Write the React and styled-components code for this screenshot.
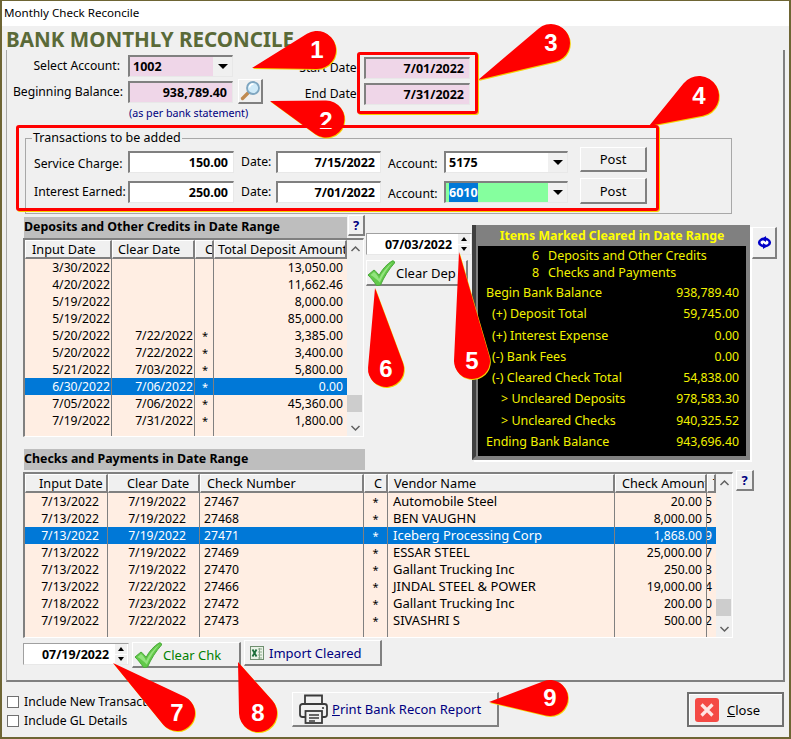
import React from "react";
import styled, { createGlobalStyle } from "styled-components";

const Global = createGlobalStyle`
  html, body { margin: 0; padding: 0; background: #f0f0f0; }
  * { box-sizing: border-box; }
`;

const Win = styled.div`
  position: relative;
  width: 791px;
  height: 739px;
  overflow: hidden;
  display: flex;
  flex-direction: column;
  background: #f0f0f0;
  border-style: solid;
  border-color: #6e6534;
  border-width: 1px 2px 2px 2px;
  font-family: "Noto Sans", sans-serif;
  font-size: 13px;
  color: #000;
`;
const TitleBar = styled.div`
  height: 25px;
  flex: none;
  background: #fff;
  padding-left: 2px;
  font-size: 11.6px;
  line-height: 24px;
`;
const Heading = styled.div`
  height: 24px;
  flex: none;
  padding-left: 4px;
  font-size: 20.6px;
  font-weight: 700;
  line-height: 26px;
  color: #5a6a38;
`;
const Panel = styled.div`
  height: 632px;
  flex: none;
  margin-left: 4px;
  width: 779px;
  border-left: 1px solid #a8a8a8;
  border-right: 2px solid #808080;
  border-bottom: 2px solid #808080;
`;
const TopSection = styled.div`
  display: flex;
  gap: 6px;
  height: 80px;
`;
const AccountGrid = styled.div`
  display: grid;
  grid-template-columns: 116px 105px 24px;
  grid-auto-rows: 22px;
  column-gap: 5px;
  row-gap: 4px;
  padding-top: 5px;
  width: 257px;
  align-items: center;
`;
const Label = styled.div`
  text-align: right;
  white-space: nowrap;
  font-size: 12.2px;
  padding-right: ${(p) => p.$pad || 0}px;
  padding-bottom: 2px;
`;
const Sunken = styled.div`
  height: 22px;
  display: flex;
  align-items: center;
  justify-content: ${(p) => (p.$left ? "flex-start" : "flex-end")};
  background: ${(p) => p.$bg || "#fff"};
  border-style: solid;
  border-width: 2px 1px 1px 2px;
  border-color: #808080 #e8e8e8 #e8e8e8 #808080;
  padding: 0 ${(p) => (p.$left ? 0 : 5)}px 0 ${(p) => (p.$left ? 3 : 0)}px;
  font-size: 12.5px;
  font-weight: 700;
  white-space: nowrap;
  overflow: hidden;
`;
const DropArrow = styled.span`
  margin-left: auto;
  width: 19px;
  height: 100%;
  flex: none;
  background: #f0f0f0;
  display: flex;
  align-items: center;
  justify-content: center;
  &::after {
    content: "";
    border-style: solid;
    border-width: 5px 5px 0 5px;
    border-color: #000 transparent transparent transparent;
  }
`;
const Btn = styled.button`
  display: flex;
  align-items: center;
  justify-content: ${(p) => p.$justify || "center"};
  gap: ${(p) => p.$gap || 0}px;
  width: ${(p) => p.$w}px;
  height: ${(p) => p.$h}px;
  margin-top: ${(p) => p.$top || 0}px;
  margin-left: ${(p) => p.$ml || 0}px;
  padding: 0 ${(p) => p.$px || 0}px;
  flex: none;
  background: #f0f0f0;
  border-style: solid;
  border-width: 1px 2px 2px 1px;
  border-color: #fff #808080 #808080 #fff;
  font-family: inherit;
  font-size: 13px;
  font-weight: ${(p) => (p.$bold ? 700 : 400)};
  color: ${(p) => p.$color || "#000"};
  white-space: nowrap;
`;
const BalanceBtn = styled(Btn)`
  margin-top: -2px;
`;
const Note = styled.div`
  grid-column: 2 / 4;
  align-self: start;
  font-size: 10.7px;
  line-height: 14px;
  color: #000080;
  padding-left: 1px;
  margin-top: -1px;
`;
const DateGrid = styled.div`
  display: grid;
  grid-template-columns: 90px 106px;
  grid-auto-rows: 22px;
  column-gap: 4px;
  row-gap: 4px;
  padding-top: 7px;
  align-items: center;
`;
const Fieldset = styled.fieldset`
  margin: 0 0 0 18px;
  padding: 5px 0 0 8px;
  width: 707px;
  height: 84px;
  border: 1px solid #a8a8a8;
`;
const Legend = styled.legend`
  margin-left: -2px;
  padding: 0 1px;
  font-size: 12.5px;
  line-height: 16px;
`;
const TxGrid = styled.div`
  display: grid;
  grid-template-columns: 94px 106px 42px 105px 63px 124px 79px;
  grid-auto-rows: 22px;
  row-gap: 8px;
  align-items: center;
`;
const TxLabel = styled.div`
  padding-left: ${(p) => p.$pad || 0}px;
  padding-top: ${(p) => (p.$low ? 2 : 0)}px;
  padding-bottom: ${(p) => (p.$low ? 0 : 2)}px;
  font-size: 12.2px;
  white-space: nowrap;
`;
const Middle = styled.div`
  display: flex;
  height: 258px;
  margin-left: 16px;
  margin-top: 0;
`;
const LeftCol = styled.div`
  width: 342px;
  flex: none;
  padding-top: 1px;
`;
const BarRow = styled.div`
  display: flex;
  align-items: flex-start;
  height: 23px;
`;
const SectionBar = styled.div`
  width: ${(p) => p.$w}px;
  height: 21px;
  margin: ${(p) => p.$mt || 0}px 0 0 1px;
  background: #bebebe;
  font-size: 12.4px;
  font-weight: 700;
  line-height: 19px;
  white-space: nowrap;
  flex: none;
`;
const HelpBtn = styled(Btn)`
  color: #000080;
  font-weight: 700;
  padding: 0;
`;
const Table = styled.div`
  display: flex;
  width: ${(p) => p.$w}px;
  height: ${(p) => p.$h}px;
  flex: none;
  background: #f0f0f0;
  border-style: solid;
  border-width: 2px 1px 1px 2px;
  border-color: #808080 #fff #fff #808080;
`;
const TableBody = styled.div`
  display: flex;
  flex-direction: column;
  flex: none;
  width: ${(p) => p.$w}px;
  background: #ffeee3;
`;
const HeadRow = styled.div`
  display: grid;
  grid-template-columns: ${(p) => p.$cols};
  height: 19px;
  flex: none;
  background: #f0f0f0;
`;
const HeadCell = styled.div`
  padding-left: ${(p) => p.$pl || 0}px;
  border-style: solid;
  border-width: 1px 2px 2px 1px;
  border-color: #fff #808080 #808080 #fff;
  font-size: 12.7px;
  line-height: 16px;
  white-space: nowrap;
  overflow: hidden;
`;
const BodyRow = styled.div`
  display: grid;
  grid-template-columns: ${(p) => p.$cols};
  height: ${(p) => (p.$fill ? "auto" : "17px")};
  flex: ${(p) => (p.$fill ? 1 : "none")};
  background: ${(p) => (p.$sel ? "#0078d7" : "transparent")};
  color: ${(p) => (p.$sel ? "#fff" : "#000")};
`;
const Cell = styled.div`
  display: flex;
  justify-content: ${(p) => (p.$al === "r" ? "flex-end" : p.$al === "c" ? "center" : "flex-start")};
  padding-left: ${(p) => p.$pl || 0}px;
  padding-right: ${(p) => p.$pr || 0}px;
  border-right: ${(p) => (p.$last ? "none" : "1px solid #808080")};
  font-size: ${(p) => (p.$star ? 11 : p.$num ? 12.2 : 13)}px;
  line-height: 17px;
  white-space: nowrap;
  overflow: hidden;
`;
const ScrollBar = styled.div`
  flex: 1;
  display: flex;
  flex-direction: column;
  align-items: center;
  position: relative;
  padding-top: 5px;
`;
const Chevron = styled.svg`
  flex: none;
  width: 11px;
  height: 8px;
  margin-top: ${(p) => (p.$push ? "auto" : 0)};
  margin-bottom: ${(p) => (p.$push ? 4 : 0)}px;
`;
const Thumb = styled.div`
  position: absolute;
  left: 0;
  width: 15px;
  height: 17px;
  bottom: ${(p) => p.$bottom}px;
  background: #cdcdcd;
`;
const SpinCol = styled.div`
  width: 106px;
  flex: none;
  margin-left: 1px;
  padding-top: 19px;
`;
const Spinner = styled.div`
  display: flex;
  align-items: center;
  width: ${(p) => p.$w}px;
  height: 22px;
  margin-top: ${(p) => p.$top || 0}px;
  flex: none;
  background: #fff;
  border-style: solid;
  border-width: 1px;
  border-color: #a0a0a0 #e8e8e8 #e8e8e8 #a0a0a0;
  font-size: 12.4px;
  font-weight: 700;
  padding-right: 1px;
`;
const SpinValue = styled.div`
  flex: 1;
  text-align: right;
  padding-right: 6px;
`;
const Stepper = styled.div`
  width: 12px;
  height: 20px;
  flex: none;
  display: flex;
  flex-direction: column;
  gap: 1px;
  background: #fff;
`;
const Step = styled.span`
  flex: 1;
  background: #f0f0f0;
  display: flex;
  align-items: center;
  justify-content: center;
  &::after {
    content: "";
    border-style: solid;
    border-color: transparent;
    border-width: ${(p) => (p.$up ? "0 3.5px 4px 3.5px" : "4px 3.5px 0 3.5px")};
    ${(p) => (p.$up ? "border-bottom-color:#000;" : "border-top-color:#000;")}
  }
`;
const ClearDep = styled(Btn)`
  margin-top: 5px;
  padding-left: 0;
`;
const Summary = styled.div`
  width: 278px;
  height: 235px;
  margin-top: 11px;
  flex: none;
  display: flex;
  flex-direction: column;
  background: #808080;
  padding-left: 2px;
  border-left: 4px solid #404040;
  border-right: 4px solid #808080;
  border-bottom: 4px solid #808080;
  box-shadow: 2px 2px 0 #fff;
`;
const SummaryHead = styled.div`
  height: 21px;
  flex: none;
  color: #ffff00;
  text-align: center;
  font-size: 12.3px;
  font-weight: 700;
  line-height: 21px;
`;
const SummaryBody = styled.div`
  flex: 1;
  background: #000;
  color: #f2f200;
  padding: 0 7px 0 8px;
  font-size: 12.5px;
`;
const CountLine = styled.div`
  display: grid;
  grid-template-columns: 46px 16px 1fr;
  height: 17px;
  line-height: 20px;
`;
const Amount = styled.div`
  display: flex;
  justify-content: space-between;
  height: 21.3px;
  line-height: 21px;
  padding-left: ${(p) => p.$indent || 0}px;
  white-space: nowrap;
`;
const AmountValue = styled.span`
  font-size: 12.3px;
`;
const Counts = styled.div`
  height: 36px;
`;
const ChecksRow = styled.div`
  display: flex;
  height: 166px;
  margin-left: 16px;
`;
const BottomRow = styled.div`
  display: flex;
  align-items: flex-start;
  gap: 3px;
  margin: 2px 0 0 16px;
`;
const Footer = styled.div`
  display: flex;
  align-items: flex-start;
  padding-top: 10px;
`;
const CheckCol = styled.div`
  width: 290px;
  flex: none;
  padding: 4px 0 0 5px;
  display: flex;
  flex-direction: column;
  gap: 7px;
`;
const CheckLine = styled.label`
  display: flex;
  align-items: center;
  gap: 5px;
  height: 12px;
  font-size: 12.2px;
  white-space: nowrap;
`;
const CheckText = styled.span`
  margin-top: -1px;
`;
const CheckBox = styled.span`
  width: 12px;
  height: 12px;
  flex: none;
  background: #fff;
  border: 1px solid #707070;
`;
const CloseBtn = styled(Btn)`
  margin-left: auto;
  margin-right: 5px;
  border: 2px solid #707070;
  box-shadow: inset 1px 1px 0 #fff;
`;
const Under = styled.span`
  text-decoration: underline;
`;
const Overlay = styled.svg`
  position: absolute;
  left: -2px;
  top: -1px;
  width: 791px;
  height: 739px;
  pointer-events: none;
`;
const Digit = styled.text`
  font-family: "Liberation Sans", sans-serif;
  font-weight: 700;
  font-size: 24px;
  fill: #fff;
  text-anchor: middle;
`;
const Frame = styled.div`
  position: absolute;
  left: ${(p) => p.$x - 2}px;
  top: ${(p) => p.$y - 1}px;
  width: ${(p) => p.$w}px;
  height: ${(p) => p.$h}px;
  border: 3px solid #f00;
  border-radius: 3px;
  box-shadow: 1px 1px 0 #f5d000;
  pointer-events: none;
`;
const SelText = styled.span`
  background: #0078d7;
  color: #fff;
  height: 100%;
  display: flex;
  align-items: center;
`;

const ChevUp = () => (
  <Chevron viewBox="0 0 11 8"><polyline points="1.5,6 5.5,2 9.5,6" fill="none" stroke="#606060" strokeWidth="1.5" /></Chevron>
);
const ChevDown = () => (
  <Chevron $push viewBox="0 0 11 8"><polyline points="1.5,2 5.5,6 9.5,2" fill="none" stroke="#606060" strokeWidth="1.5" /></Chevron>
);
const Magnifier = () => (
  <svg width="21" height="21" viewBox="0 0 21 21">
    <line x1="2.5" y1="18.5" x2="9" y2="12" stroke="#c08a50" strokeWidth="3.4" strokeLinecap="round" />
    <circle cx="13" cy="8" r="6" fill="#cfeaf8" stroke="#7fa6c0" strokeWidth="1.8" />
    <path d="M9.5 7.5a4 4 0 0 1 4-3.5" fill="none" stroke="#fff" strokeWidth="1.6" />
  </svg>
);
const CheckMark = () => (
  <svg width="28" height="26" viewBox="0 0 28 26">
    <path d="M1 15 L7 10 C9 11.5 11 13.5 12 15.5 C15 9.5 20 4 25 1 C26.5 .5 28 1.5 27.5 3 C22 9 17 17 13.5 25 L9.5 25.5 C7 21.5 4 18 1 15 Z" fill="#62c94a" stroke="#4aa83a" strokeWidth="1" />
    <path d="M3.5 15 L7 12 C9 13.5 11 16 12 19 C15 12 20 6.5 25.5 2.5 C20.5 8 16 15 12.8 22.5 C10 19.5 7 17 3.5 15 Z" fill="#a4ec92" opacity=".75" />
  </svg>
);
const Excel = () => (
  <svg width="14" height="14" viewBox="0 0 14 14">
    <rect x=".5" y=".5" width="13" height="13" fill="#e9f2e6" stroke="#6f8f6f" />
    <path d="M8 3h4M8 6h4M8 9h4M8 12h4M9.5 2v11" stroke="#8aa88a" strokeWidth="1" />
    <path d="M2.5 3.5l4 7M6.5 3.5l-4 7" stroke="#1d6f3a" strokeWidth="1.8" />
  </svg>
);
const Printer = () => (
  <svg width="32" height="32" viewBox="0 0 32 32" fill="none" stroke="#3a3a3a" strokeWidth="1.8">
    <path d="M7 11V2.5h17V11" />
    <path d="M7 24H4.5A2.5 2.5 0 0 1 2 21.5V13.5A2.5 2.5 0 0 1 4.5 11h22A2.5 2.5 0 0 1 29 13.5v8a2.5 2.5 0 0 1-2.5 2.5H24" />
    <rect x="7.5" y="18" width="16.5" height="12" fill="#f0f0f0" />
    <path d="M11 22h10M11 25h10M11 28h6" strokeWidth="1.3" />
    <circle cx="25" cy="15" r="1.1" fill="#3a3a3a" stroke="none" />
  </svg>
);
const CloseIcon = () => (
  <svg width="24" height="24" viewBox="0 0 24 24">
    <rect width="24" height="24" rx="3" fill="#f44a45" />
    <path d="M6.5 6.5l11 11M17.5 6.5l-11 11" stroke="#ffe6e4" strokeWidth="3.2" />
  </svg>
);
const SwapIcon = () => (
  <svg width="15" height="15" viewBox="0 0 15 15">
    <ellipse cx="7.5" cy="7.5" rx="5.3" ry="3.6" fill="#fff" stroke="#0000c8" strokeWidth="2.6" />
    <path d="M9 1v6L4.5 4Z" fill="#0000c8" />
    <path d="M6 14V8l4.5 3Z" fill="#0000c8" />
  </svg>
);

const callouts = [
  { n: 1, cx: 317, cy: 50, r: 19, tx: 252, ty: 68 },
  { n: 2, cx: 326, cy: 119, r: 18.5, tx: 270, ty: 101, dy: 10 },
  { n: 3, cx: 551, cy: 43, r: 19, tx: 478, ty: 80 },
  { n: 4, cx: 699, cy: 96, r: 20, tx: 649, ty: 126 },
  { n: 5, cx: 472, cy: 361, r: 18, tx: 459, ty: 252 },
  { n: 6, cx: 386, cy: 369, r: 18, tx: 375, ty: 288 },
  { n: 7, cx: 177, cy: 713, r: 18, tx: 113, ty: 663 },
  { n: 8, cx: 258, cy: 713, r: 19, tx: 238, ty: 662 },
  { n: 9, cx: 550, cy: 698, r: 18, tx: 489, ty: 702 },
];
const teardrop = ({ cx, cy, r, tx, ty }) => {
  const d = Math.hypot(cx - tx, cy - ty);
  const a = Math.atan2(cy - ty, cx - tx);
  const b = Math.asin(r / d);
  const l = Math.sqrt(d * d - r * r);
  const p1 = [tx + l * Math.cos(a + b), ty + l * Math.sin(a + b)];
  const p2 = [tx + l * Math.cos(a - b), ty + l * Math.sin(a - b)];
  return `M${tx} ${ty}L${p1[0]} ${p1[1]}A${r} ${r} 0 1 0 ${p2[0]} ${p2[1]}Z`;
};

const depCols = "87px 83px 19px 133px";
const deposits = [
  ["3/30/2022", "", "", "13,050.00"],
  ["4/20/2022", "", "", "11,662.46"],
  ["5/19/2022", "", "", "8,000.00"],
  ["5/19/2022", "", "", "85,000.00"],
  ["5/20/2022", "7/22/2022", "*", "3,385.00"],
  ["5/20/2022", "7/22/2022", "*", "3,400.00"],
  ["5/21/2022", "7/03/2022", "*", "5,800.00"],
  ["6/30/2022", "7/06/2022", "*", "0.00"],
  ["7/05/2022", "7/06/2022", "*", "45,360.00"],
  ["7/19/2022", "7/31/2022", "*", "1,800.00"],
];
const chkCols = "83px 92px 164px 24px 227px 92px 9px";
const checks = [
  ["7/13/2022", "7/19/2022", "27467", "*", "Automobile Steel", "20.00", "5"],
  ["7/13/2022", "7/19/2022", "27468", "*", "BEN VAUGHN", "8,000.00", "5"],
  ["7/13/2022", "7/19/2022", "27471", "*", "Iceberg Processing Corp", "1,868.00", "9"],
  ["7/13/2022", "7/19/2022", "27469", "*", "ESSAR STEEL", "25,000.00", "7"],
  ["7/13/2022", "7/19/2022", "27470", "*", "Gallant Trucking Inc", "250.00", "3"],
  ["7/13/2022", "7/22/2022", "27466", "*", "JINDAL STEEL & POWER", "19,000.00", "4"],
  ["7/18/2022", "7/23/2022", "27472", "*", "Gallant Trucking Inc", "200.00", "0"],
  ["7/19/2022", "7/22/2022", "27473", "*", "SIVASHRI S", "500.00", "2"],
];
const amounts = [
  ["Begin Bank Balance", "938,789.40", 0],
  ["(+) Deposit Total", "59,745.00", 6],
  ["(+) Interest Expense", "0.00", 6],
  ["(-) Bank Fees", "0.00", 6],
  ["(-) Cleared Check Total", "54,838.00", 6],
  [">  Uncleared Deposits", "978,583.30", 15],
  [">  Uncleared Checks", "940,325.52", 15],
  ["Ending Bank Balance", "943,696.40", 0],
];

const Spin = ({ value, w, top }) => (
  <Spinner $w={w} $top={top}>
    <SpinValue>{value}</SpinValue>
    <Stepper><Step $up /><Step /></Stepper>
  </Spinner>
);

export default function App() {
  return (
    <>
      <Global />
      <Win>
        <TitleBar>Monthly Check Reconcile</TitleBar>
        <Heading>BANK MONTHLY RECONCILE</Heading>
        <Panel>
          <TopSection>
            <AccountGrid>
              <Label $pad={3}>Select Account:</Label>
              <Sunken $left $bg="#efd6e8">1002<DropArrow /></Sunken>
              <span />
              <Label>Beginning Balance:</Label>
              <Sunken $bg="#efd6e8">938,789.40</Sunken>
              <BalanceBtn $w={25} $h={25}><Magnifier /></BalanceBtn>
              <span />
              <Note>(as per bank statement)</Note>
            </AccountGrid>
            <DateGrid>
              <Label>Start Date:</Label>
              <Sunken $bg="#efd6e8">7/01/2022</Sunken>
              <Label>End Date:</Label>
              <Sunken $bg="#efd6e8">7/31/2022</Sunken>
            </DateGrid>
          </TopSection>
          <Fieldset>
            <Legend>Transactions to be added</Legend>
            <TxGrid>
              <TxLabel $low>Service Charge:</TxLabel>
              <Sunken>150.00</Sunken>
              <TxLabel $pad={7}>Date:</TxLabel>
              <Sunken>7/15/2022</Sunken>
              <TxLabel $pad={7} $low>Account:</TxLabel>
              <Sunken $left>5175<DropArrow /></Sunken>
              <Btn $w={67} $h={25} $top={-5} $ml={12}>Post</Btn>
              <TxLabel>Interest Earned:</TxLabel>
              <Sunken>250.00</Sunken>
              <TxLabel $pad={7}>Date:</TxLabel>
              <Sunken>7/01/2022</Sunken>
              <TxLabel $pad={7} $low>Account:</TxLabel>
              <Sunken $left $bg="#85ff9e"><SelText>6010</SelText><DropArrow /></Sunken>
              <Btn $w={67} $h={26} $top={-2} $ml={12}>Post</Btn>
            </TxGrid>
          </Fieldset>
          <Middle>
            <LeftCol>
              <BarRow>
                <SectionBar $w={323} $mt={2}>Deposits and Other Credits in Date Range</SectionBar>
                <HelpBtn $w={17} $h={21} $ml={1}>?</HelpBtn>
              </BarRow>
              <Table $w={341} $h={199}>
                <TableBody $w={322}>
                  <HeadRow $cols={depCols}>
                    <HeadCell $pl={6}>Input Date</HeadCell>
                    <HeadCell $pl={5}>Clear Date</HeadCell>
                    <HeadCell $pl={9}>C</HeadCell>
                    <HeadCell $pl={3}>Total Deposit Amount</HeadCell>
                  </HeadRow>
                  {deposits.map((r, i) => (
                    <BodyRow key={i} $cols={depCols} $sel={i === 7}>
                      <Cell $num $al="r" $pr={1}>{r[0]}</Cell>
                      <Cell $num $al="r" $pr={1}>{r[1]}</Cell>
                      <Cell $star $al="c" $pl={2}>{r[2]}</Cell>
                      <Cell $num $al="r" $pr={4} $last>{r[3]}</Cell>
                    </BodyRow>
                  ))}
                  <BodyRow $fill $cols={depCols}><Cell /><Cell /><Cell /><Cell $last /></BodyRow>
                </TableBody>
                <ScrollBar>
                  <ChevUp />
                  <Thumb $bottom={24} />
                  <ChevDown />
                </ScrollBar>
              </Table>
              <SectionBar $w={341} $mt={12}>Checks and Payments in Date Range</SectionBar>
            </LeftCol>
            <SpinCol>
              <Spin value="07/03/2022" w={106} />
              <ClearDep $w={102} $h={26} $justify="flex-start" $gap={1}>
                <CheckMark />
                Clear Dep
              </ClearDep>
            </SpinCol>
            <Summary>
              <SummaryHead>Items Marked Cleared in Date Range</SummaryHead>
              <SummaryBody>
                <Counts>
                  <CountLine><span /><span>6</span><span>Deposits and Other Credits</span></CountLine>
                  <CountLine><span /><span>8</span><span>Checks and Payments</span></CountLine>
                </Counts>
                {amounts.map(([l, v, ind]) => (
                  <Amount key={l} $indent={ind}><span>{l}</span><AmountValue>{v}</AmountValue></Amount>
                ))}
              </SummaryBody>
            </Summary>
            <Btn $w={25} $h={32} $top={13} $ml={2}><SwapIcon /></Btn>
          </Middle>
          <ChecksRow>
            <Table $w={710} $h={166}>
              <TableBody $w={691}>
                <HeadRow $cols={chkCols}>
                  <HeadCell $pl={13}>Input Date</HeadCell>
                  <HeadCell $pl={18}>Clear Date</HeadCell>
                  <HeadCell $pl={6}>Check Number</HeadCell>
                  <HeadCell $pl={9}>C</HeadCell>
                  <HeadCell $pl={5}>Vendor Name</HeadCell>
                  <HeadCell $pl={6}>Check Amount</HeadCell>
                  <HeadCell $pl={5}>T</HeadCell>
                </HeadRow>
                {checks.map((r, i) => (
                  <BodyRow key={i} $cols={chkCols} $sel={i === 2}>
                    <Cell $num $al="r" $pr={8}>{r[0]}</Cell>
                    <Cell $num $al="r" $pr={13}>{r[1]}</Cell>
                    <Cell $num $pl={4}>{r[2]}</Cell>
                    <Cell $star $al="c">{r[3]}</Cell>
                    <Cell $pl={5}>{r[4]}</Cell>
                    <Cell $num $al="r" $pr={4}>{r[5]}</Cell>
                    <Cell $num $al="r" $pr={4} $last>{r[6]}</Cell>
                  </BodyRow>
                ))}
                <BodyRow $fill $cols={chkCols}><Cell /><Cell /><Cell /><Cell /><Cell /><Cell /><Cell $last /></BodyRow>
              </TableBody>
              <ScrollBar>
                <ChevUp />
                <Thumb $bottom={21} />
                <ChevDown />
              </ScrollBar>
            </Table>
            <HelpBtn $w={18} $h={21} $top={-2} $ml={3}>?</HelpBtn>
          </ChecksRow>
          <BottomRow>
            <Spin value="07/19/2022" w={106} top={3} />
            <Btn $w={109} $h={26} $top={2} $justify="flex-start" $gap={1} $px={1} $color="#008000">
              <CheckMark />
              Clear Chk
            </Btn>
            <Btn $w={138} $h={26} $justify="flex-start" $gap={5} $px={5} $color="#000080">
              <Excel />
              Import Cleared
            </Btn>
          </BottomRow>
        </Panel>
        <Footer>
          <CheckCol>
            <CheckLine><CheckBox /><CheckText>Include New Transactions</CheckText></CheckLine>
            <CheckLine><CheckBox /><CheckText>Include GL Details</CheckText></CheckLine>
          </CheckCol>
          <Btn $w={207} $h={35} $justify="flex-start" $gap={2} $px={5} $color="#000080">
            <Printer />
            <span><Under>P</Under>rint Bank Recon Report</span>
          </Btn>
          <CloseBtn $w={97} $h={35} $justify="flex-start" $gap={8} $px={6}>
            <CloseIcon />
            <span><Under>C</Under>lose</span>
          </CloseBtn>
        </Footer>
        <Overlay viewBox="0 0 791 739">
          {callouts.map((c) => (
            <g key={c.n}>
              <path d={teardrop(c)} fill="#f5d000" transform="translate(0.8 1)" />
              <path d={teardrop(c)} fill="#f00" />
              <Digit x={c.cx} y={c.cy + (c.dy || 8)}>{c.n}</Digit>
            </g>
          ))}
        </Overlay>
        <Frame $x={357} $y={52} $w={121} $h={62} />
        <Frame $x={16} $y={125} $w={643} $h={86} />
      </Win>
    </>
  );
}
